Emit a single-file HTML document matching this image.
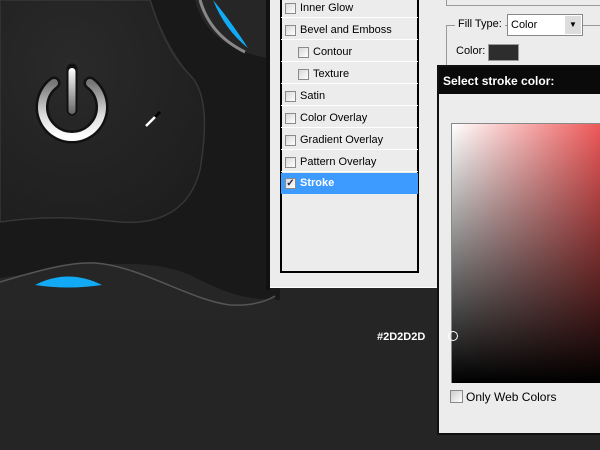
<!DOCTYPE html><html><head><style>
*{margin:0;padding:0;box-sizing:border-box}
body{width:600px;height:450px;overflow:hidden;background:#252525;position:relative;font-family:"Liberation Sans",Tahoma,sans-serif;font-size:11px;color:#000}
.a{position:absolute}
.row{position:absolute;left:281px;width:137px;height:22px;border-bottom:1px solid #fff;line-height:24px}
.cb{position:absolute;top:7px;width:11px;height:11px;border:1px solid #8a8a8a;background:linear-gradient(135deg,#d8d8d8,#fff)}
.row span{position:absolute;left:19px}
</style></head><body>
<svg class="a" style="left:0;top:0" width="280" height="320">
<defs><radialGradient id="g1" cx="0.35" cy="0.3" r="0.8"><stop offset="0" stop-color="#2a2a2a"/><stop offset="1" stop-color="#1e1e1e"/></radialGradient>
<linearGradient id="pw" x1="0" y1="0" x2="0" y2="1"><stop offset="0" stop-color="#777"/><stop offset=".6" stop-color="#ddd"/><stop offset="1" stop-color="#fff"/></linearGradient>
<linearGradient id="pb" x1="0" y1="0" x2="0" y2="1"><stop offset="0" stop-color="#fff"/><stop offset="1" stop-color="#666"/></linearGradient></defs>
<rect width="280" height="320" fill="#262626"/>
<path d="M195 0 C205 40 240 55 280 60 V300 C240 300 220 290 190 275 C150 258 100 262 0 278 V222 C50 215 80 218 120 222 C160 225 190 210 200 170 C205 140 210 95 190 75 C175 55 160 30 150 0Z" fill="#191919"/>
<path d="M0 0H150 C160 30 170 55 190 75 C210 95 205 140 200 170 C190 210 160 225 120 222 C80 218 50 215 0 222Z" fill="url(#g1)" stroke="#363636" stroke-width="1.5"/>
<path d="M0 282 C40 270 70 262 95 263 C140 266 190 300 230 305 C250 306 265 302 275 296 V320 H0Z" fill="#262626"/>
<path d="M0 282 C40 270 70 262 95 263 C140 266 190 300 230 305 C250 306 265 302 275 296" fill="none" stroke="#555" stroke-width="1.5"/>
<path d="M35 285 Q68 268 102 285 Q68 290 35 285Z" fill="#12aaf4"/>
<path d="M213 0 Q230 20 248 48 Q225 30 213 0Z" fill="#12aaf4"/>
<path d="M200 0 Q210 35 245 52" fill="none" stroke="#888" stroke-width="3"/>
<path d="M54 83 A30 30 0 1 0 90 83" fill="none" stroke="#111" stroke-width="13" stroke-linecap="round"/>
<path d="M54 83 A30 30 0 1 0 90 83" fill="none" stroke="url(#pw)" stroke-width="8" stroke-linecap="round"/>
<line x1="72" y1="69" x2="72" y2="110" stroke="#111" stroke-width="11" stroke-linecap="round"/>
<rect x="68.5" y="68" width="7" height="46" rx="3.5" fill="url(#pb)"/>
<path d="M146 126 L158 114" stroke="#fff" stroke-width="2.5"/><path d="M155 117 L160 112" stroke="#000" stroke-width="3"/>
</svg>
<div class="a" style="left:266px;top:0;width:4px;height:290px;background:#111"></div>
<div class="a" style="left:270px;top:0;width:167px;height:288px;background:#ececec;border-bottom:1px solid #fff"></div>
<div class="a" style="left:280px;top:-2px;width:139px;height:275px;border:2px solid #000;background:#ececec"></div>
<div class="row" style="top:-4px"><div class="cb" style="left:4px"></div><span>Inner Glow</span></div>
<div class="row" style="top:18px"><div class="cb" style="left:4px"></div><span>Bevel and Emboss</span></div>
<div class="row" style="top:40px"><div class="cb" style="left:17px"></div><span style="left:32px">Contour</span></div>
<div class="row" style="top:62px"><div class="cb" style="left:17px"></div><span style="left:32px">Texture</span></div>
<div class="row" style="top:84px"><div class="cb" style="left:4px"></div><span>Satin</span></div>
<div class="row" style="top:106px"><div class="cb" style="left:4px"></div><span>Color Overlay</span></div>
<div class="row" style="top:128px"><div class="cb" style="left:4px"></div><span>Gradient Overlay</span></div>
<div class="row" style="top:150px"><div class="cb" style="left:4px"></div><span>Pattern Overlay</span></div>
<div class="row" style="top:173px;height:21px;background:#3d9bff;color:#fff;font-weight:bold;border:none;line-height:21px"><div class="cb" style="left:4px;top:5px;color:#224;font-size:10px;line-height:9px;text-align:center">✓</div><span>Stroke</span></div>
<div class="a" style="left:437px;top:0;width:163px;height:66px;background:#ececec"></div>
<div class="a" style="left:446px;top:-2px;width:160px;height:8px;border:1px solid #999;border-top:none"></div>
<div class="a" style="left:446px;top:25px;width:160px;height:50px;border-left:1px solid #999;border-top:1px solid #999"></div>
<div class="a" style="left:455px;top:18px;background:#ececec;padding:0 3px">Fill Type:</div>
<div class="a" style="left:507px;top:14px;width:76px;height:22px;border:1px solid #888;background:#fff;padding:4px 3px">Color<div class="a" style="right:1px;top:1px;width:16px;height:18px;background:#ddd;text-align:center;font-size:8px;line-height:18px">▼</div></div>
<div class="a" style="left:456px;top:45px">Color:</div>
<div class="a" style="left:488px;top:44px;width:31px;height:17px;background:#2d2d2d;border:1px solid #999"></div>
<div class="a" style="left:437px;top:65px;width:163px;height:370px;background:#ececec;border:2px solid #111;border-right:none"></div>
<div class="a" style="left:439px;top:67px;width:161px;height:27px;background:#0a0a0a;color:#fff;font-weight:bold;font-size:12px;padding:7px 4px">Select stroke color:</div>
<div class="a" style="left:451px;top:123px;width:149px;height:260px;background:linear-gradient(to bottom,rgba(0,0,0,0),#000),linear-gradient(to right,#fff,#ee5858);border-left:1px solid #888;border-top:1px solid #888"></div>
<div class="a" style="left:448px;top:331px;width:10px;height:10px;border:1px solid #fff;border-radius:50%"></div>
<div class="a" style="left:450px;top:390px;width:13px;height:13px;border:1px solid #888;background:linear-gradient(135deg,#ccc,#fff)"></div>
<div class="a" style="left:466px;top:390px;font-size:12px">Only Web Colors</div>
<div class="a" style="left:377px;top:331px;color:#fff;font-weight:bold;font-size:11px">#2D2D2D</div>
</body></html>
